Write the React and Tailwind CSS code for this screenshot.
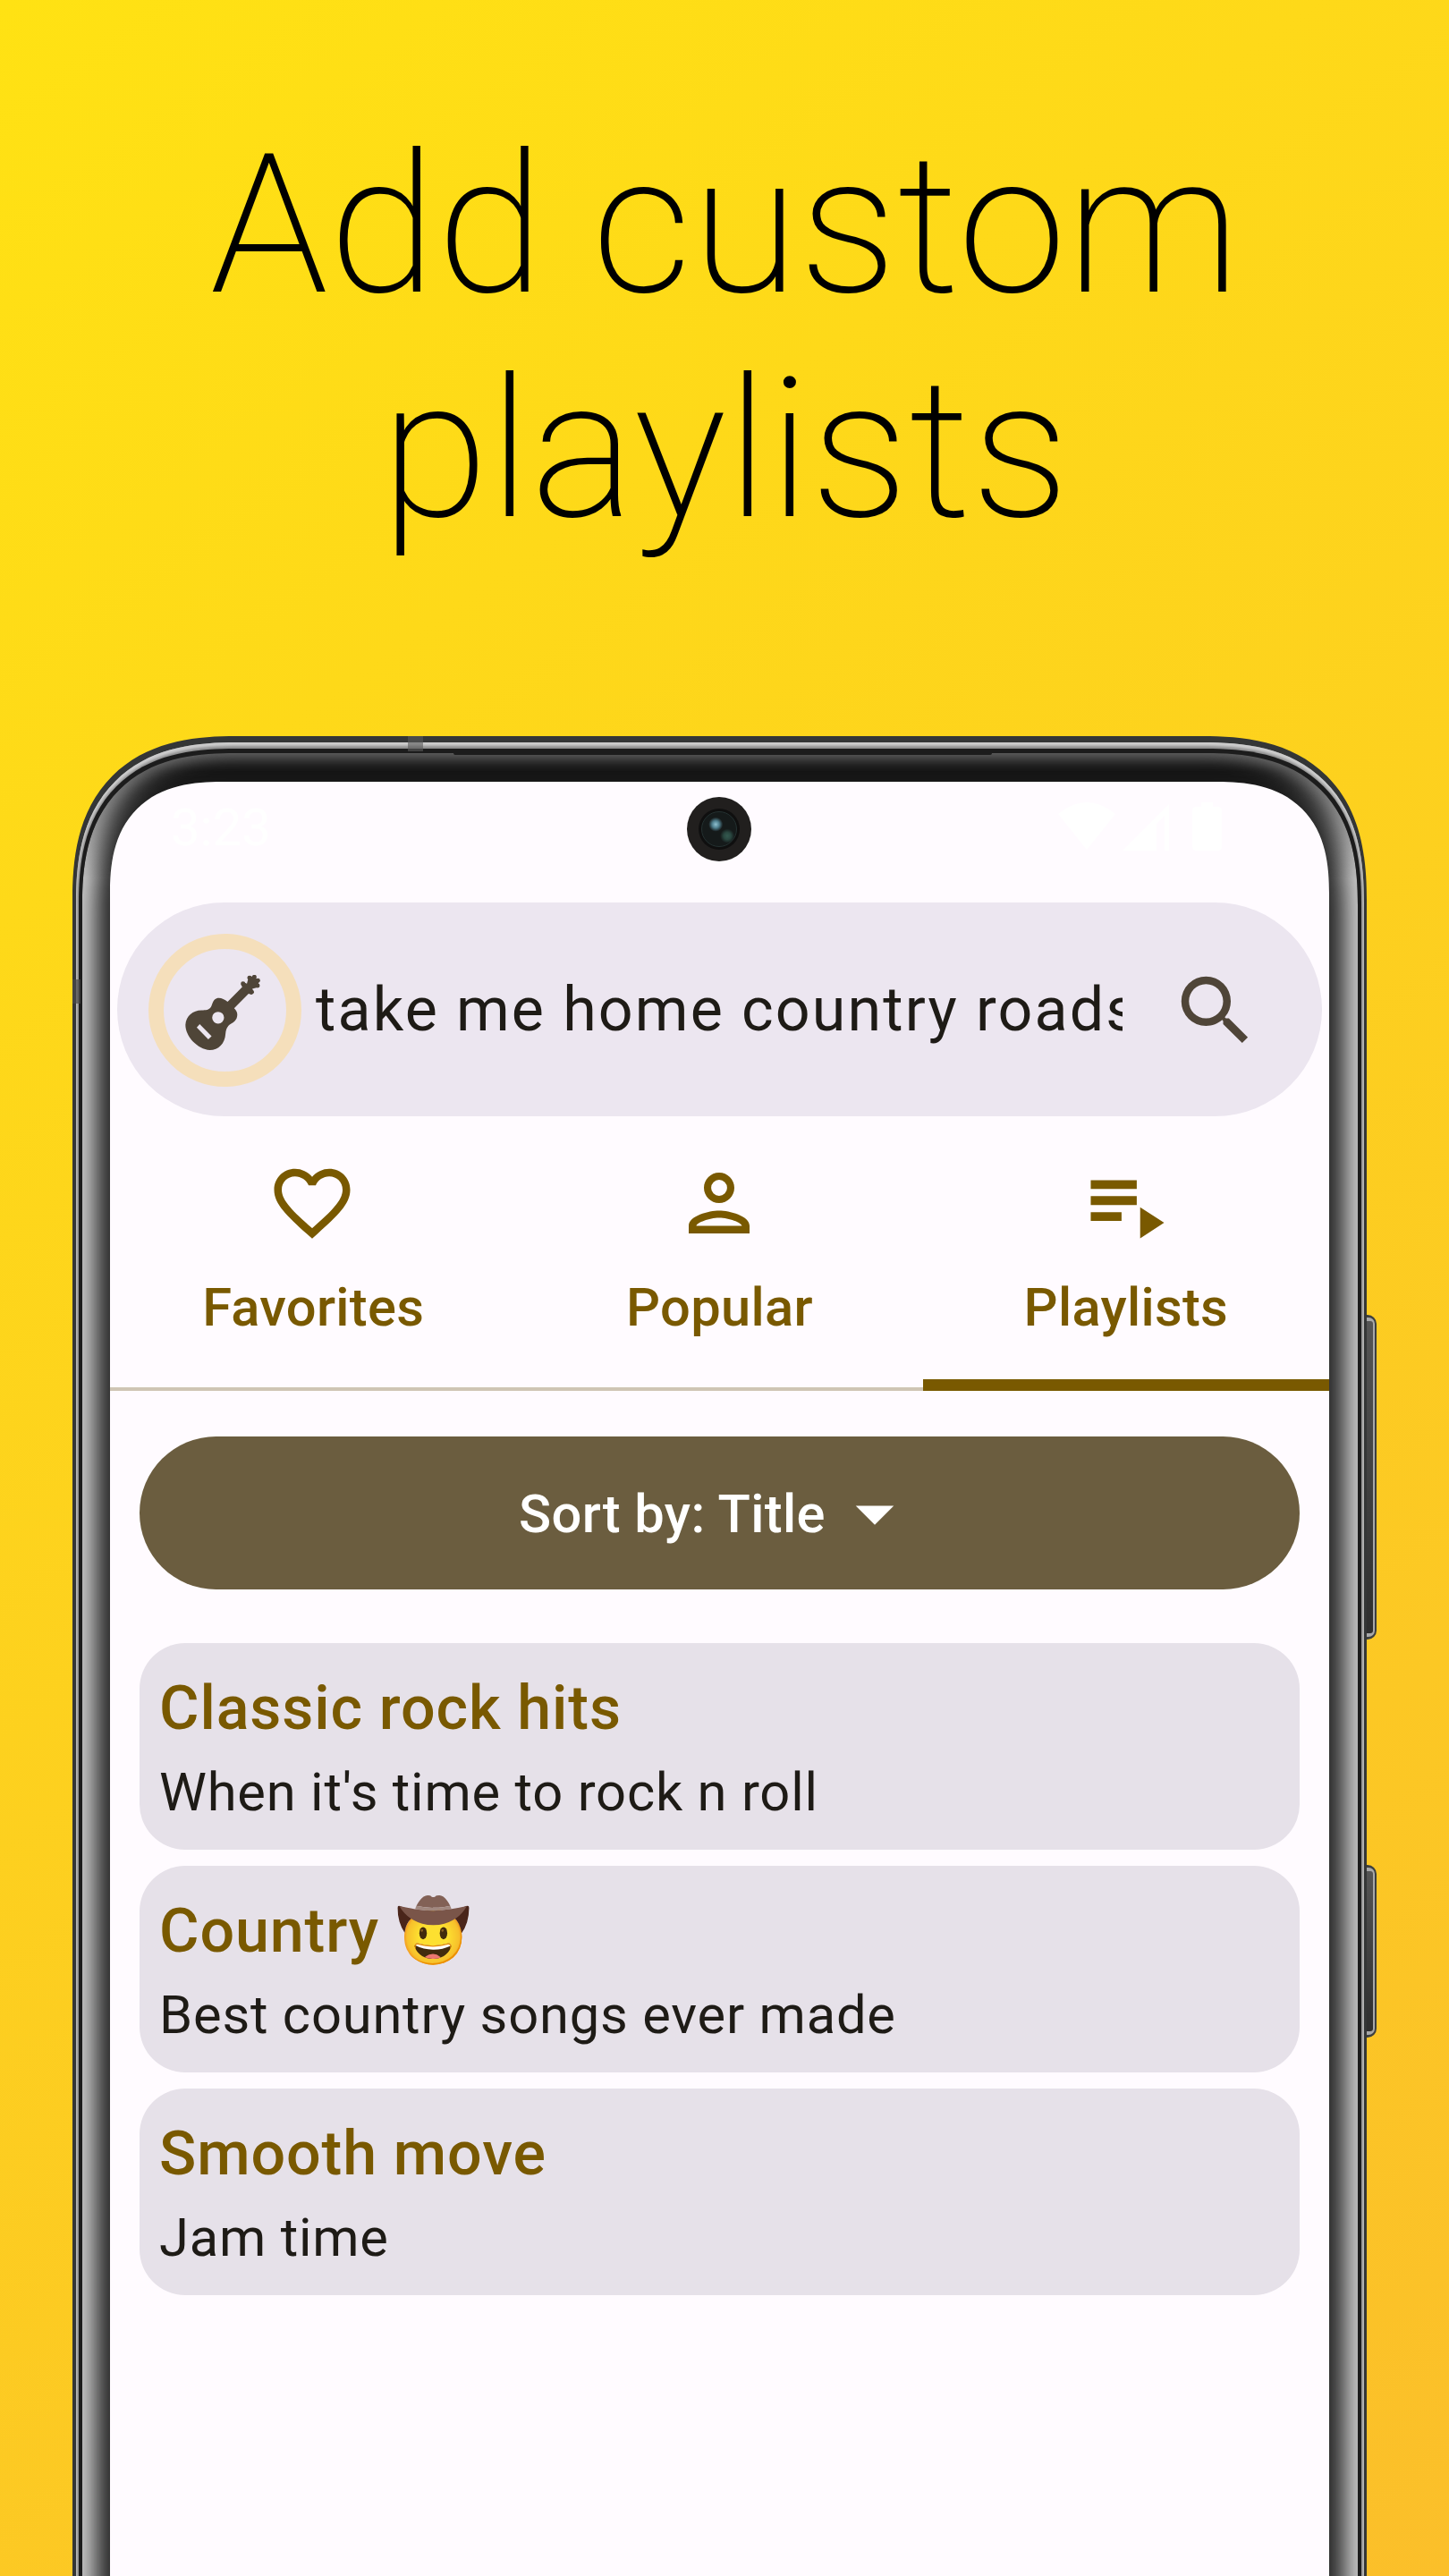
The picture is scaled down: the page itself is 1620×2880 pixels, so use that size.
const PLAYLISTS = [
  { title: "Classic rock hits", description: "When it's time to rock n roll" },
  { title: "Country 🤠", description: "Best country songs ever made" },
  { title: "Smooth move", description: "Jam time" },
];

function HeartIcon() {
  return (
    <svg viewBox="0 0 24 24" className="size-[102px] -translate-x-px" fill="currentColor">
      <path d="M16.5 3c-1.74 0-3.41.81-4.5 2.09C10.91 3.81 9.24 3 7.5 3 4.42 3 2 5.42 2 8.5c0 3.78 3.4 6.86 8.55 11.54L12 21.35l1.45-1.32C18.6 15.36 22 12.28 22 8.5 22 5.42 19.58 3 16.5 3zm-4.4 15.55l-.1.1-.1-.1C7.14 14.24 4 11.39 4 8.5 4 6.5 5.5 5 7.5 5c1.54 0 3.04.99 3.57 2.36h1.87C13.46 5.99 14.96 5 16.5 5c2 0 3.5 1.5 3.5 3.5 0 2.89-3.14 5.74-7.9 10.05z" />
    </svg>
  );
}

function PersonIcon() {
  return (
    <svg viewBox="0 0 24 24" className="size-[102px]" fill="currentColor">
      <path d="M12 5.9a2.1 2.1 0 110 4.2 2.1 2.1 0 010-4.2m0 10c2.7 0 5.8 1.29 6 2.1H6c.23-.8 3.31-2.1 6-2.1M12 4C9.79 4 8 5.79 8 8s1.79 4 4 4 4-1.79 4-4-1.79-4-4-4zm0 10c-2.67 0-8 1.34-8 4v2h16v-2c0-2.66-5.33-4-8-4z" />
    </svg>
  );
}

function PlaylistIcon() {
  return (
    <svg viewBox="0 0 24 24" className="size-[102px]" fill="currentColor">
      <path d="M2.7 6h12.1v2.3H2.7zM2.7 10.2h12.1v2.3H2.7zM2.7 14.4h8.1v2.3H2.7zM15.7 13.1v8.2l6.3-4.1z" />
    </svg>
  );
}

function SearchIcon() {
  return (
    <svg viewBox="0 0 24 24" className="size-[102px] shrink-0" fill="currentColor">
      <path d="M15.5 14h-.79l-.28-.27A6.471 6.471 0 0016 9.5 6.5 6.5 0 109.5 16c1.61 0 3.09-.59 4.23-1.57l.27.28v.79l5 4.99L20.49 19l-4.99-5zm-6 0C7.01 14 5 11.99 5 9.5S7.01 5 9.5 5 14 7.01 14 9.5 11.99 14 9.5 14z" />
    </svg>
  );
}

function GuitarIcon() {
  return (
    <svg viewBox="0 0 253 253" className="size-[84px]" fill="currentColor">
      <path
        fillRule="evenodd"
        d="M143 90 L193 40 L215 62 L165 112 C176 122 178 134 173 147 C167 158 158 163 150 167 C139 176 137 186 136 198 C134 232 112 253 83 253 C42 250 1 208 1 168 C3 138 26 119 55 119 C70 119 80 119 87 108 C93 97 92 85 106 79 C118 75 131 82 143 90 Z M111 124 a20 20 0 100 40 a20 20 0 000-40 Z M49 166 L39 177 L78 217 L89 206 Z"
      />
      <path d="M192 41 L188 32 L196 24 L208 29 L213 10 L230 3 L249 20 L243 42 L226 47 L232 58 L223 66 L214 63 Z" />
      <circle cx="195" cy="29" r="7.5" />
      <circle cx="217" cy="10" r="7.5" />
      <circle cx="233" cy="7" r="7.5" />
      <circle cx="245" cy="19" r="7.5" />
      <circle cx="244" cy="36" r="7.5" />
      <circle cx="224" cy="58" r="7.5" />
    </svg>
  );
}

function StatusIcons() {
  return (
    <svg viewBox="0 0 184 56" className="mt-[22px] h-14 w-[184px]" fill="#ffffff">
      <path d="M0 14 Q32 -12 64 14 L32 54 Z" />
      <path d="M72 55 L124 3 V55 H119 V16 L110 25 V55 Z" />
      <path d="M155 6 h5 v-5 h13 v5 h5 q5 0 5 5 v39 q0 5-5 5 h-23 q-5 0-5-5 v-39 q0-5 5-5z" />
    </svg>
  );
}

function Camera() {
  return (
    <div className="absolute top-[17px] left-[645px] flex size-[72px] items-center justify-center rounded-full bg-[#211f1e]">
      <div className="flex size-[46px] items-center justify-center rounded-full bg-[#0f0f0f]">
        <div className="size-[40px] rounded-full border border-[#243131] bg-[#151a1a] bg-[radial-gradient(circle_at_40%_36%,#8fc0d0_0,#4f7f8e_4px,transparent_8px),radial-gradient(circle_at_74%_70%,#34594f_0,#2a4841_4px,transparent_8px)]" />
      </div>
    </div>
  );
}

function SearchBar() {
  return (
    <div className="mx-2 flex h-[239px] shrink-0 items-center rounded-full bg-[#ece6f0] pl-[35px] text-[#4f4538]">
      <div className="mt-[2px] flex size-[171px] shrink-0 items-center justify-center rounded-full border-[17px] border-[#f5dfbb]">
        <div className="-translate-x-[3px] translate-y-[2px]">
          <GuitarIcon />
        </div>
      </div>
      <div className="mt-px mr-[53px] ml-[16px] w-[902px] shrink-0 overflow-hidden text-[68.17px] leading-[102px] tracking-[2.13px] whitespace-nowrap text-[#1e1b16]">
        take me home country roads
      </div>
      <div className="mt-[3px]">
        <SearchIcon />
      </div>
    </div>
  );
}

function Tab({ icon, label, active }) {
  return (
    <div className="relative flex flex-1 flex-col items-center border-b-4 border-[#cfc5b4] pt-[46px] text-[#795900]">
      {icon}
      <span className="mt-6 text-[59.65px] leading-[85px] font-medium tracking-[0.3px]">{label}</span>
      {active && <div className="absolute inset-x-0 -bottom-1 h-[13px] bg-[#795900]" />}
    </div>
  );
}

function Screen() {
  return (
    <div className="relative flex h-full flex-col overflow-hidden rounded-t-[125px] bg-[#fffbff] [corner-shape:superellipse(1.32)]">
      <div className="flex h-[135px] shrink-0 justify-between pr-[119px] pl-[68px] text-white">
        <span className="mt-[17px] text-[58px] leading-[68px]">3:23</span>
        <StatusIcons />
      </div>
      <Camera />
      <SearchBar />
      <div className="flex h-[307px] shrink-0">
        <Tab icon={<HeartIcon />} label="Favorites" />
        <Tab icon={<PersonIcon />} label="Popular" />
        <Tab icon={<PlaylistIcon />} label="Playlists" active />
      </div>
      <div className="mx-[33px] mt-[51px] flex h-[171px] shrink-0 items-center justify-center rounded-full bg-[#6b5d3f] text-white">
        <span className="mt-[3px] text-[59.65px] leading-[85px] font-medium tracking-[0.4px]">Sort by: Title</span>
        <svg viewBox="0 0 24 24" className="ml-1 size-[102px]" fill="currentColor">
          <path d="M7 10l5 5 5-5z" />
        </svg>
      </div>
      <div className="mx-[33px] mt-[60px] flex flex-col gap-[18px]">
        {PLAYLISTS.map((p) => (
          <div key={p.title} className="h-[231px] rounded-[51px] bg-[#e6e1e9] px-[22px] pt-[22px]">
            <div className="h-[102px] text-[68.17px] leading-[102px] font-medium tracking-[0.9px] text-[#795900]">{p.title}</div>
            <div className="text-[59.65px] leading-[86px] tracking-[0.8px] text-[#1e1b16]">{p.description}</div>
          </div>
        ))}
      </div>
    </div>
  );
}

function SideButton({ className }) {
  return (
    <div className={`absolute -right-[11px] w-[13px] rounded-r-[10px] bg-[#3c3f40] py-[3px] pr-[2px] ${className}`}>
      <div className="h-full rounded-r-[7px] bg-[#a8a8a8] py-[4px] pr-[2px]">
        <div className="h-full rounded-r-[3px] bg-linear-to-b from-[#555555] to-[#2e2e2e]" />
      </div>
    </div>
  );
}

function Phone() {
  return (
    <div className="relative mt-[195px] ml-[81px] h-[2200px] w-[1447px] shrink-0">
      <SideButton className="top-[647px] h-[363px]" />
      <SideButton className="top-[1262px] h-[193px]" />
      <div className="relative h-full rounded-t-[184px] bg-[#343636] px-[3.5px] pt-[7px] [corner-shape:superellipse(1.32)]">
        <div className="h-full rounded-t-[180px] bg-[#8c8c8c] px-[3px] pt-[7px] shadow-[inset_0_3px_3px_1px_#cdcdcd] [corner-shape:superellipse(1.32)]">
          <div className="h-full rounded-t-[174px] bg-[#1c1c1c] px-[4px] pt-[5px] [corner-shape:superellipse(1.32)]">
            <div className="relative h-full rounded-t-[170px] bg-[#141414] px-[31.5px] pt-[32px] shadow-[inset_0_0_16px_6px_#6c6c6c] [corner-shape:superellipse(1.32)]">
              <div className="absolute inset-0 rounded-t-[170px] bg-[#292929] [mask-image:linear-gradient(to_bottom,transparent_20px,black_140px)] shadow-[inset_0_0_24px_15px_#cbcbcb] [corner-shape:superellipse(1.32)]" />
              <div className="absolute top-0 left-[415px] h-[2px] w-[602px] rounded-b-sm bg-[#1c1c1c]" />
              <Screen />
            </div>
          </div>
        </div>
        <div className="absolute top-0 left-[375px] h-[17px] w-[17px] bg-[#5a5a5a]/60" />
        <div className="absolute top-[272px] left-0 h-[27px] w-[9px] bg-[#4a4a4a]/70" />
      </div>
    </div>
  );
}

export default function App() {
  return (
    <div className="flex h-[2880px] w-[1620px] flex-col overflow-hidden bg-[linear-gradient(145deg,#ffe213,#fbbf2a)] font-[Roboto,sans-serif]">
      <h1 className="mt-[126px] h-[502px] shrink-0 pl-0.5 text-center text-[218px] leading-[251px] font-[190] tracking-[0.5px] text-black">
        Add custom
        <br />
        playlists
      </h1>
      <Phone />
    </div>
  );
}
